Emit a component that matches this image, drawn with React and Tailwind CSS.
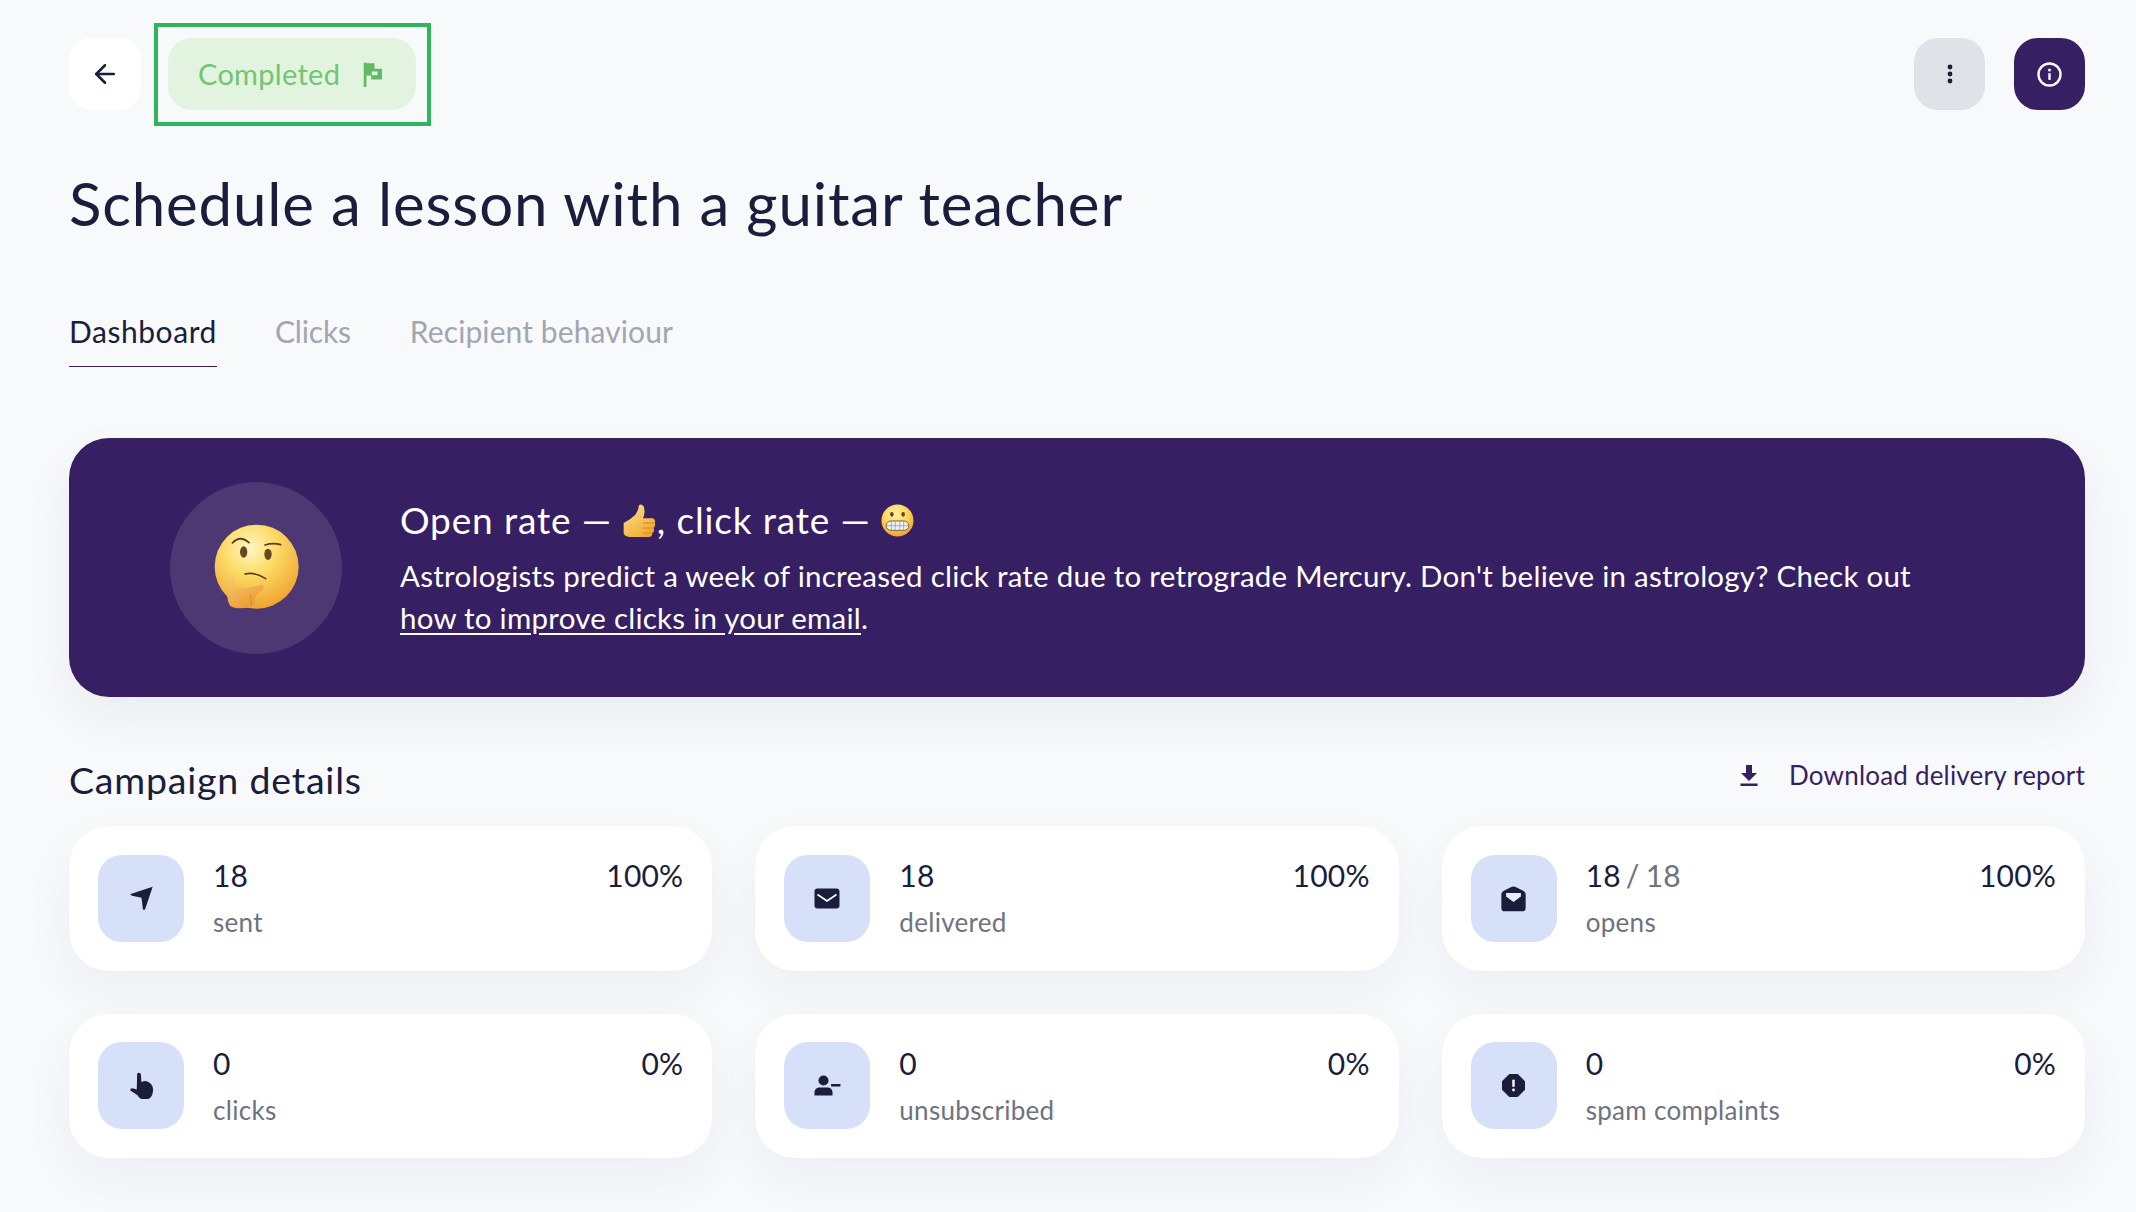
import React from "react";
import { ArrowLeft } from "lucide-react";

const SendIcon = () => (
  <svg width="27" height="27" viewBox="20 47 80 80" fill="#1a1d3b">
    <path d="M93 52 28 74q-2 4 4 5l28 6 4 33q3 6 7 0z" />
  </svg>
);

const MailIcon = () => (
  <svg width="26" height="21" viewBox="0 0 26 21">
    <rect x="0.500" y="0.500" width="25" height="20" rx="3" fill="#1a1d3b" />
    <path d="M3.500 6.500 13 13l9.500-6.500" fill="none" stroke="#fff" strokeWidth="1.800" />
  </svg>
);

const OpenMailIcon = () => (
  <svg width="27" height="27" viewBox="34 44 80 80">
    <path d="M38 72q0-6 6-10l22-11q8-5 16 0l22 11q6 4 6 10v40q0 10-10 10H48q-10 0-10-10z" fill="#1a1d3b" />
    <path d="M52 68h44v10L74 94 52 78z" fill="#e6ecfc" />
  </svg>
);

const HandIcon = () => (
  <svg width="27" height="27" viewBox="20 36 80 80" fill="#1a1d3b">
    <path d="M47 42q5-8 11 0l2 24q12-8 24 2 12 10 10 24-2 24-22 26-17 0-24-13L26 90q0-6 8-6l12 4z" />
  </svg>
);

const UserMinusIcon = () => (
  <svg width="27" height="21" viewBox="0 0 27 21" fill="#1a1d3b">
    <ellipse cx="9.500" cy="5.500" rx="5" ry="5" />
    <path d="M0.500 20.500v-3q0-4 4-5h10q4 1 4 5v3z" />
    <rect x="17" y="9" width="9.500" height="2.400" rx="0.600" />
  </svg>
);

const AlertIcon = () => (
  <svg width="23" height="23" viewBox="0 0 23 23">
    <path d="M7.200 0.500h8.600l6.700 6.700v8.600l-6.700 6.700H7.200L0.500 15.800V7.200z" fill="#1a1d3b" stroke="#1a1d3b" strokeLinejoin="round" />
    <rect x="10.300" y="5.500" width="2.400" height="7.500" rx="1" fill="#fff" />
    <circle cx="11.500" cy="16" r="1.400" fill="#fff" />
  </svg>
);

const ThinkingEmoji = () => (
  <svg width="110" height="110" viewBox="3 7 330 330">
    <defs>
      <radialGradient id="thinkFace" cx="42%" cy="28%" r="78%">
        <stop offset="0%" stopColor="#fff6c4" />
        <stop offset="40%" stopColor="#fcdc68" />
        <stop offset="100%" stopColor="#ee9d2a" />
      </radialGradient>
      <linearGradient id="thinkHand" x1="0" y1="0" x2="0.600" y2="1">
        <stop offset="0%" stopColor="#f9cc72" />
        <stop offset="100%" stopColor="#ec9a34" />
      </linearGradient>
    </defs>
    <circle cx="170" cy="168" r="126" fill="url(#thinkFace)" />
    <path d="M97 97q23-25 50-1" fill="none" stroke="#5d3a1c" strokeWidth="5" strokeLinecap="round" />
    <path d="M195 103q25-8 47-1" fill="none" stroke="#5d3a1c" strokeWidth="5" strokeLinecap="round" />
    <ellipse cx="131" cy="124" rx="11" ry="17" fill="#6b4420" />
    <ellipse cx="204" cy="131" rx="11" ry="17" fill="#6b4420" />
    <path d="M135 190q30-7 62 14" fill="none" stroke="#5d3a1c" strokeWidth="5" strokeLinecap="round" />
    <path d="M86 200q6-10 14-2l10 32q30 5 75-8 10 3 3 16-18 10-23 24 3 23-15 28-40 8-60-5-12-20-6-45z" fill="url(#thinkHand)" />
    <path d="M150 250l5 35" fill="none" stroke="#d88a2a" strokeWidth="3" />
  </svg>
);

const ThumbEmoji = () => (
  <svg width="35" height="35" viewBox="35 20 105 105">
    <defs>
      <linearGradient id="thumbFill" x1="0" y1="0" x2="0.800" y2="1">
        <stop offset="0%" stopColor="#ffe48a" />
        <stop offset="100%" stopColor="#efa630" />
      </linearGradient>
    </defs>
    <path d="M40 80q20-10 35-25 10-13 10-27 7-8 15 2 6 20-2 36h30q8 4 6 14 2 10-4 15 4 10-4 15 0 12-11 12H65q-20 0-25-10z" fill="url(#thumbFill)" />
    <path d="M98 80h36M98 95h32M98 110h28" stroke="#cf8a20" strokeWidth="3" fill="none" />
  </svg>
);

const GrimaceEmoji = () => (
  <svg width="33" height="33" viewBox="0 0 35 35">
    <defs>
      <radialGradient id="grimFace" cx="45%" cy="30%" r="75%">
        <stop offset="0%" stopColor="#fff2a8" />
        <stop offset="50%" stopColor="#fbd658" />
        <stop offset="100%" stopColor="#f0992a" />
      </radialGradient>
    </defs>
    <circle cx="17.500" cy="17.500" r="17" fill="url(#grimFace)" />
    <ellipse cx="11.500" cy="11" rx="1.900" ry="2.600" fill="#6a4220" />
    <ellipse cx="23.500" cy="11" rx="1.900" ry="2.600" fill="#6a4220" />
    <rect x="5.500" y="18" width="24" height="10" rx="5" fill="#eef0f2" stroke="#7a5a30" strokeWidth="1" />
    <path d="M5.500 23h24M11 18v10M15 18v10M20 18v10M24 18v10" stroke="#9a9a9a" strokeWidth="0.800" />
  </svg>
);

const stats = [
  { value: "18", pct: "100%", label: "sent", icon: <SendIcon /> },
  { value: "18", pct: "100%", label: "delivered", icon: <MailIcon /> },
  { value: "18", total: "18", pct: "100%", label: "opens", icon: <OpenMailIcon /> },
  { value: "0", pct: "0%", label: "clicks", icon: <HandIcon /> },
  { value: "0", pct: "0%", label: "unsubscribed", icon: <UserMinusIcon /> },
  { value: "0", pct: "0%", label: "spam complaints", icon: <AlertIcon /> },
];

const App = () => {
  return (
    <div className="w-[2136px] h-[1212px] overflow-hidden bg-[#f7f9fb] pl-[69px] pr-[51px] pt-[38px] font-['Lato',sans-serif] text-[#1a1d3b]">
      {/* Top bar */}
      <div className="flex h-[72px] items-center">
        <button className="flex h-[72px] w-[72px] items-center justify-center rounded-[22px] bg-white">
          <ArrowLeft size={30} strokeWidth={2} color="#1a1d3b" />
        </button>
        <div className="ml-[13px] border-4 border-[#2fb65c] py-[11.500px] pl-[10px] pr-[11px]">
          <div className="flex h-[72px] w-[248px] items-center rounded-[24px] bg-[#e2f4df] pl-[30px]">
            <span className="text-[29px] tracking-[0.3px] text-[#72c573]">Completed</span>
            <svg className="ml-[22px]" width="22" height="27" viewBox="35 25 65 80">
              <rect x="40" y="30" width="8" height="72" fill="#5fbb63" />
              <path d="M46 32h26v16h22v32H62V68H46z" fill="#5fbb63" />
              <rect x="64" y="56" width="17" height="11" fill="#e2f4df" />
            </svg>
          </div>
        </div>
        <button className="ml-auto flex h-[72px] w-[71px] items-center justify-center rounded-[24px] bg-[#e0e2e8]">
          <svg width="6" height="20" viewBox="0 0 6 20" fill="#1a1d3b">
            <circle cx="3" cy="3" r="2.400" />
            <circle cx="3" cy="10" r="2.400" />
            <circle cx="3" cy="17" r="2.400" />
          </svg>
        </button>
        <button className="ml-[29px] flex h-[72px] w-[71px] items-center justify-center rounded-[24px] bg-[#371f63]">
          <svg width="25" height="25" viewBox="0 0 25 25">
            <circle cx="12.500" cy="12.500" r="11" fill="none" stroke="#fff" strokeWidth="2.400" />
            <circle cx="12.500" cy="8" r="1.500" fill="#fff" />
            <rect x="11.300" y="11" width="2.400" height="7" rx="0.800" fill="#fff" />
          </svg>
        </button>
      </div>

      <h1 className="mt-[58px] text-[60px] font-normal leading-[70px] tracking-[0.85px]">
        Schedule a lesson with a guitar teacher
      </h1>

      {/* Tabs */}
      <div className="mt-[73px] flex text-[30px] leading-[40px]">
        <div className="border-b-[1.500px] border-[#371f63] pb-[15px] tracking-[0.55px]">Dashboard</div>
        <div className="ml-[58px] tracking-[-0.15px] text-[#a3a6b1]">Clicks</div>
        <div className="ml-[59px] tracking-[0.1px] text-[#a3a6b1]">Recipient behaviour</div>
      </div>

      {/* Banner */}
      <div className="mt-[71px] flex h-[259px] items-center rounded-[40px] bg-[#371f63] pl-[101px] text-white shadow-[0_20px_50px_rgba(30,30,80,0.06)]">
        <div className="flex h-[172px] w-[172px] shrink-0 items-center justify-center rounded-full bg-[#4e3873]">
          <ThinkingEmoji />
        </div>
        <div className="ml-[58px]">
          <div className="flex h-[48px] items-center text-[37px] tracking-[0.85px]">
            Open rate —<span className="ml-[10px]"><ThumbEmoji /></span>, click rate —
            <span className="ml-[10px]"><GrimaceEmoji /></span>
          </div>
          <p className="mt-[11px] text-[29.500px] leading-[42px] tracking-[0.25px] whitespace-nowrap">
            Astrologists predict a week of increased click rate due to retrograde Mercury. Don't believe in astrology? Check out
            <br />
            <span className="underline underline-offset-4">how to improve clicks in your email</span>.
          </p>
        </div>
      </div>

      {/* Campaign details */}
      <div className="mt-[61px] mb-[24px] flex items-start justify-between">
        <h2 className="text-[37.500px] font-normal leading-[44px] tracking-[0.8px]">Campaign details</h2>
        <a className="flex items-center text-[26px] leading-[34px] tracking-[0.2px] text-[#371f63]">
          <svg width="18" height="21" viewBox="0 0 18 21" fill="#371f63">
            <path d="M6 0h6v8h5l-8 8-8-8h5z" />
            <rect x="0.500" y="18.500" width="17" height="2.500" />
          </svg>
          <span className="ml-[31px]">Download delivery report</span>
        </a>
      </div>

      <div className="grid grid-cols-3 gap-x-[43px] gap-y-[43px]">
        {stats.map((stat) => (
          <div
            key={stat.label}
            className="flex h-[144.500px] items-center rounded-[40px] bg-white px-[29px] shadow-[0_20px_50px_rgba(30,30,80,0.05)]"
          >
            <div className="flex h-[87px] w-[86px] shrink-0 items-center justify-center rounded-[24px] bg-[#d6e0f9]">
              {stat.icon}
            </div>
            <div className="ml-[29px] flex-1 self-start pt-[28px]">
              <div className="flex justify-between text-[30px] leading-[42px] tracking-[0.2px]">
                <span>
                  {stat.value}
                  {stat.total && (
                    <span className="text-[#6f7280]">
                      <span className="ml-[5px]">/</span>
                      <span className="ml-[6px]">{stat.total}</span>
                    </span>
                  )}
                </span>
                <span>{stat.pct}</span>
              </div>
              <div className="mt-[8px] text-[26px] leading-[36px] tracking-[0.3px] text-[#6f7280]">{stat.label}</div>
            </div>
          </div>
        ))}
      </div>
    </div>
  );
};

export default App;
